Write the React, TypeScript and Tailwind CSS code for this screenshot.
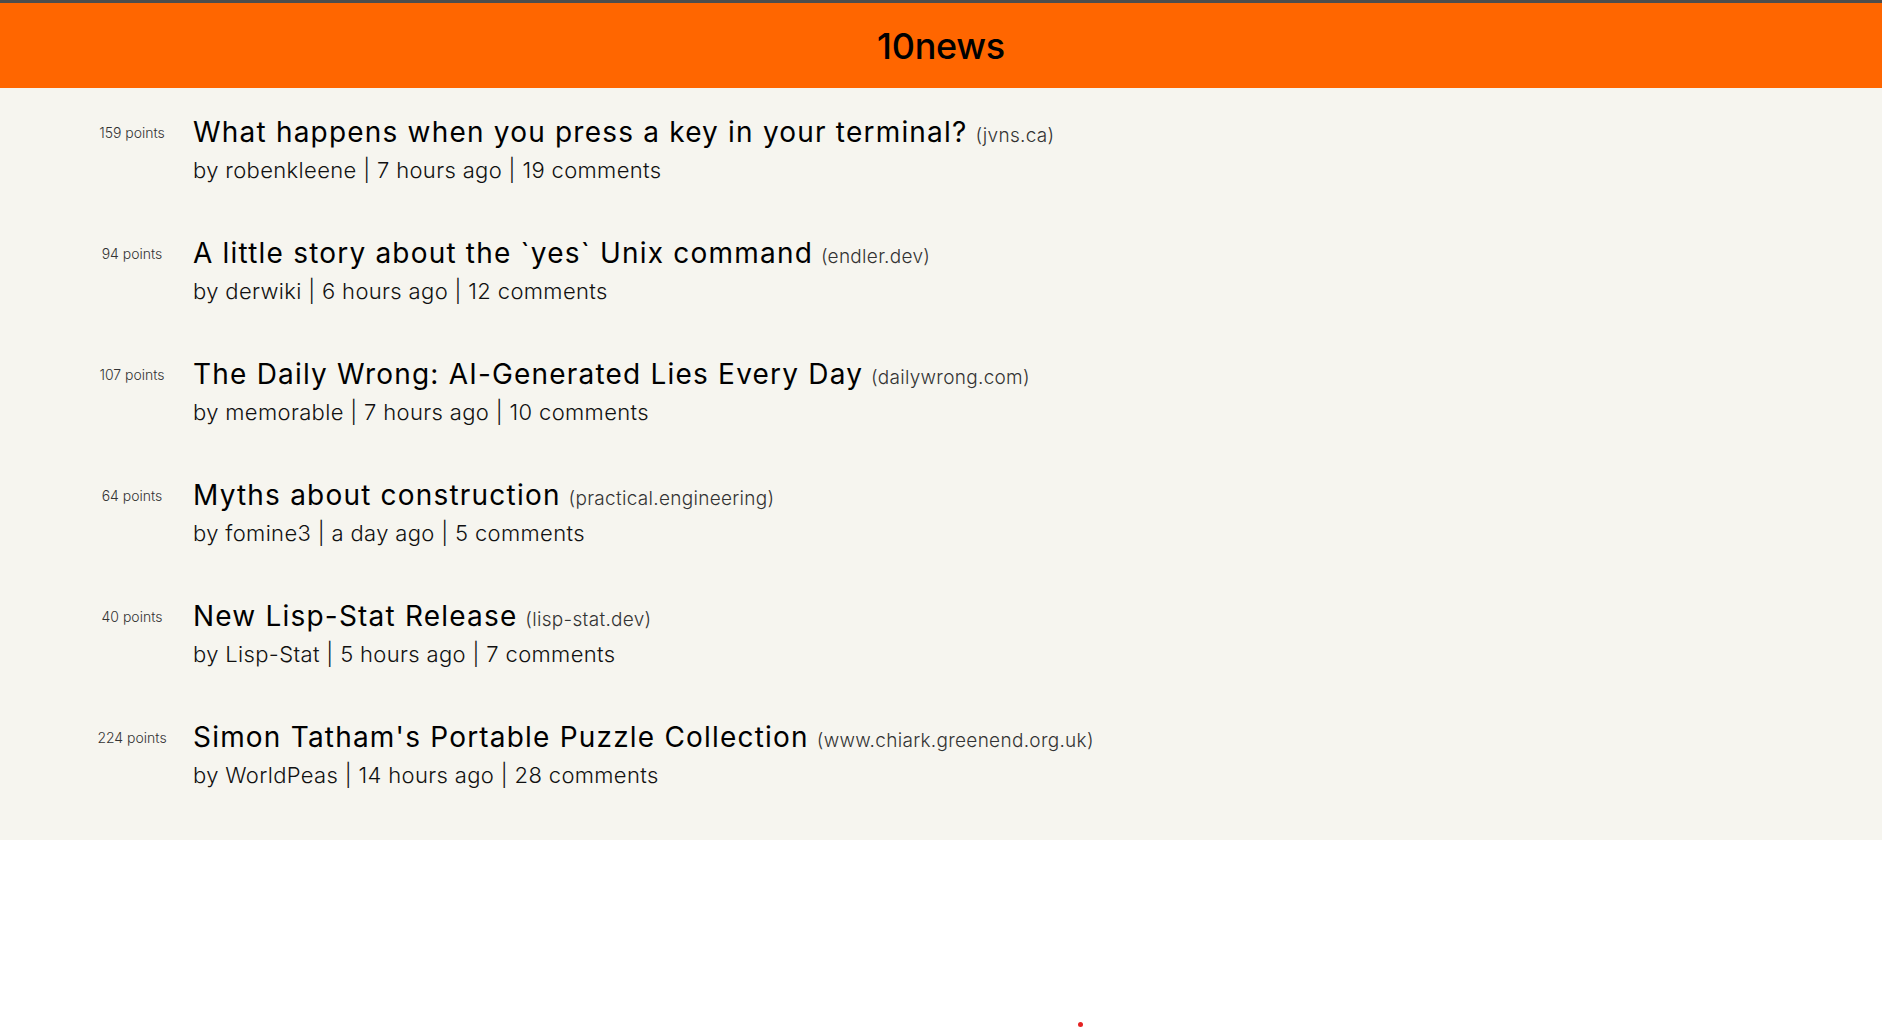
import React from "react";

type Story = {
  points: number;
  title: string;
  domain: string;
  by: string;
  ago: string;
  comments: number;
};

const stories: Story[] = [
  { points: 159, title: "What happens when you press a key in your terminal?", domain: "jvns.ca", by: "robenkleene", ago: "7 hours ago", comments: 19 },
  { points: 94, title: "A little story about the `yes` Unix command", domain: "endler.dev", by: "derwiki", ago: "6 hours ago", comments: 12 },
  { points: 107, title: "The Daily Wrong: AI-Generated Lies Every Day", domain: "dailywrong.com", by: "memorable", ago: "7 hours ago", comments: 10 },
  { points: 64, title: "Myths about construction", domain: "practical.engineering", by: "fomine3", ago: "a day ago", comments: 5 },
  { points: 40, title: "New Lisp-Stat Release", domain: "lisp-stat.dev", by: "Lisp-Stat", ago: "5 hours ago", comments: 7 },
  { points: 224, title: "Simon Tatham's Portable Puzzle Collection", domain: "www.chiark.greenend.org.uk", by: "WorldPeas", ago: "14 hours ago", comments: 28 },
];

export default function App() {
  return (
    <div className="relative min-h-[1029px] bg-white font-['Inter','Open_Sans',sans-serif] text-black">
      <div className="h-[3px] bg-[#4d4d4d]" />
      <header className="flex h-[85px] items-center justify-center bg-[#ff6600]">
        <h1 className="text-[36px] font-medium leading-none tracking-[-0.3px] text-black">10news</h1>
      </header>
      <main className="bg-[#f6f5ef] pb-[50px] pt-[26px]">
        <ul className="flex flex-col gap-[50px]">
          {stories.map((s) => (
            <li key={s.title} className="flex items-start pl-[82px]">
              <div className="w-[100px] shrink-0 pt-[9px] text-center text-[14px] leading-[20px] font-light text-[#333]">
                {s.points} points
              </div>
              <div className="ml-[11px] flex flex-col gap-[5px]">
                <div className="h-[36px] text-[28px] leading-[36px] whitespace-nowrap">
                  <span className="tracking-[1.2px]">{s.title}</span>{" "}
                  <span className="text-[19px] leading-none font-light tracking-[0.3px] text-[#333]">({s.domain})</span>
                </div>
                <div className="text-[22px] leading-[30px] font-light tracking-[0.35px] text-[#111]">
                  by {s.by} | {s.ago} | {s.comments} comments
                </div>
              </div>
            </li>
          ))}
        </ul>
      </main>
      <div className="absolute left-[1078px] top-[1022px] h-[5px] w-[5px] rounded-full bg-[#e52222]" />
    </div>
  );
}
